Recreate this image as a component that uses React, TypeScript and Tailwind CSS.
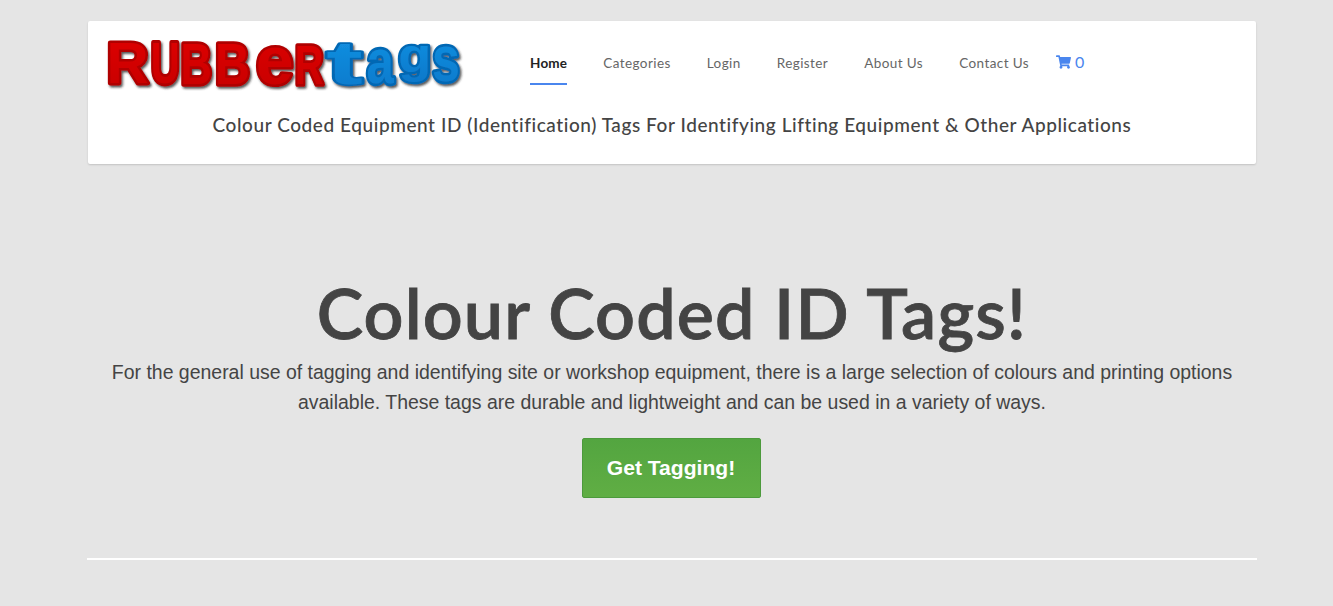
import { FaShoppingCart } from "react-icons/fa";

const navItems = ["Categories", "Login", "Register", "About Us", "Contact Us"];

// target boxes measured off the logo: l, r, t, b; ink = glyph size in em at 100px
const logoLetters = [
  { c: "R", l: 3, r: 46, t: 5, b: 49, iw: 65, ih: 69, lb: 7, desc: 0, red: true },
  { c: "U", l: 46, r: 75, t: 4, b: 49, iw: 60, ih: 70, lb: 7, desc: 0, red: true },
  { c: "B", l: 76, r: 108, t: 6, b: 50, iw: 62, ih: 69, lb: 7, desc: 0, red: true },
  { c: "B", l: 111, r: 146, t: 6, b: 50, iw: 62, ih: 69, lb: 7, desc: 0, red: true },
  { c: "e", l: 151, r: 190, t: 8, b: 50, iw: 50, ih: 54, lb: 4, desc: 0, red: true },
  { c: "R", l: 190, r: 221, t: 7, b: 50, iw: 65, ih: 69, lb: 7, desc: 0, red: true },
  { c: "t", l: 221, r: 260, t: 4, b: 50, iw: 31, ih: 67, lb: 2, desc: 0, red: false },
  { c: "a", l: 261, r: 291, t: 10, b: 49, iw: 51, ih: 54, lb: 4, desc: 0, red: false },
  { c: "g", l: 293, r: 325, t: 9, b: 49, iw: 50, ih: 73, lb: 4, desc: 21, red: false },
  { c: "s", l: 326, r: 355, t: 7, b: 47, iw: 48, ih: 54, lb: 3, desc: 0, red: false },
];

const stroke = 5;

const Logo = () => (
  <svg width="360" height="56" viewBox="0 0 360 56" className="block">
    <defs>
      <linearGradient id="red" x1="0" y1="0" x2="0" y2="1">
        <stop offset="0" stopColor="#e00000" />
        <stop offset="1" stopColor="#c60000" />
      </linearGradient>
      <linearGradient id="blue" x1="0" y1="0" x2="0" y2="1">
        <stop offset="0" stopColor="#1593e4" />
        <stop offset="1" stopColor="#0878ca" />
      </linearGradient>
      <filter id="drop" x="-5%" y="-10%" width="110%" height="130%">
        <feDropShadow dx="1.5" dy="2" stdDeviation="1" floodColor="#222" floodOpacity="0.75" />
      </filter>
    </defs>
    <g filter="url(#drop)" fontFamily="'Liberation Sans', sans-serif" fontWeight="700" fontSize="100" strokeLinejoin="round">
      {logoLetters.map((g, i) => {
        const sx = (g.r - g.l - stroke) / g.iw;
        const sy = (g.b - g.t - stroke) / g.ih;
        const x = g.l + stroke / 2 - g.lb * sx;
        const y = g.b - stroke / 2 - g.desc * sy;
        return (
          <text
            key={i}
            transform={`translate(${x},${y}) scale(${sx},${sy})`}
            fill={g.red ? "url(#red)" : "url(#blue)"}
            stroke={g.red ? "#b00000" : "#0668b4"}
            strokeWidth={stroke}
            vectorEffect="non-scaling-stroke"
            paintOrder="stroke"
          >
            {g.c}
          </text>
        );
      })}
    </g>
  </svg>
);

export default function App() {
  return (
    <div className="min-h-[606px] bg-[#e5e5e5] pt-[21px] overflow-hidden">
      <div className="ml-[87px] w-[1170px]">
        <header className="mx-px bg-white rounded-[2px] shadow-[0_1px_2px_rgba(0,0,0,0.15)] h-[143px] font-['Lato',sans-serif]">
          <div className="flex items-start h-[84px]">
            <div className="ml-[17px] mt-[15px] w-[425px] shrink-0">
              <Logo />
            </div>
            <nav className="flex items-start text-[13.5px] tracking-[0.42px] text-[#666]">
              <a className="mt-[32px] h-[32px] border-b-2 border-[#4a86ee] font-bold text-[#222] leading-[20px] tracking-[0.2px]">
                Home
              </a>
              {navItems.map((item) => (
                <a key={item} className="mt-[32px] ml-[36px] leading-[20px]">
                  {item}
                </a>
              ))}
              <a className="mt-[31px] ml-[27px] flex items-center gap-[4px] text-[#4a86ee] text-[16px] leading-[20px] tracking-normal">
                <FaShoppingCart className="w-[15px] h-[14px]" />0
              </a>
            </nav>
          </div>
          <p className="mt-[7px] text-center text-[19px] leading-[26px] tracking-[0.57px] text-[#444] font-medium">
            Colour Coded Equipment ID (Identification) Tags For Identifying Lifting Equipment &amp; Other Applications
          </p>
        </header>

        <section className="mt-[104px] text-center">
          <h1 className="font-['Lato',sans-serif] font-semibold text-[70px] leading-[89px] tracking-[1.1px] text-[#444] [-webkit-text-stroke:0.8px_#444]">
            Colour Coded ID Tags!
          </h1>
          <p className="mx-auto w-[1130px] font-['Liberation_Sans',sans-serif] text-[19.47px] leading-[30px] text-[#444]">
            For the general use of tagging and identifying site or workshop equipment, there is a large selection of colours and printing options available. These tags are durable and lightweight and can be used in a variety of ways.
          </p>
          <a className="mt-[21px] -ml-[2px] inline-flex items-center justify-center w-[179px] h-[60px] rounded-[2px] border border-[#4c9a3c] bg-gradient-to-b from-[#53a540] to-[#60ae44] text-white font-['Liberation_Sans',sans-serif] font-bold text-[21.1px]">
            Get Tagging!
          </a>
        </section>

        <hr className="mt-[60px] border-0 h-[2px] bg-white" />
      </div>
    </div>
  );
}
